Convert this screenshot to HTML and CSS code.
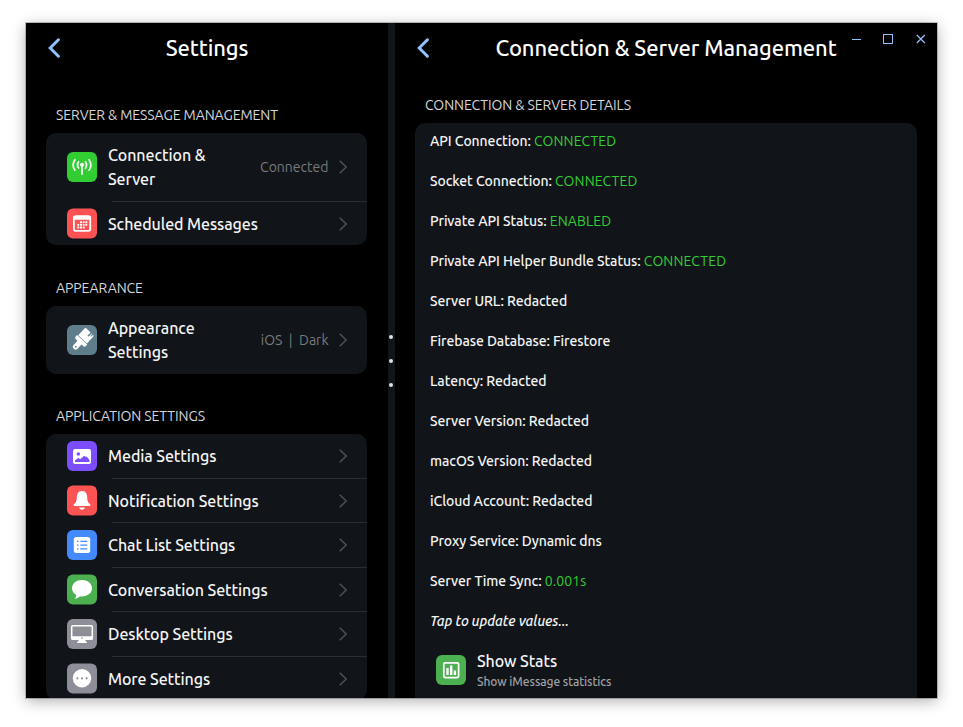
FILE: index.html
```html
<!DOCTYPE html>
<html lang="en">
<head>
<meta charset="utf-8">
<title>Settings</title>
<link rel="stylesheet" href="styles.css">
</head>
<body>
<svg class="defs" width="0" height="0">
  <symbol id="chev" viewBox="0 0 10 16"><path d="M1.700 1.700 8.200 8 1.700 14.300" fill="none" stroke="#4e5054" stroke-width="1.500"/></symbol>
  <symbol id="back" viewBox="0 0 14 20"><path d="M11.400 1.800 3.200 10l8.200 8.200" fill="none" stroke="#90c1fb" stroke-width="3" stroke-linecap="round" stroke-linejoin="miter"/></symbol>
</svg>
<div class="window">
  <section class="pane left">
    <header class="bar"><svg class="back"><use href="#back"/></svg><h1>Settings</h1></header>
    <h2 class="s1">SERVER &amp; MESSAGE MANAGEMENT</h2>
    <div class="card">
      <div class="row tall">
        <span class="ico green"><svg viewBox="0 0 30 30"><g fill="none" stroke="#fff" stroke-width="1.700"><path d="M11.900 9.300q-2.800 3.700 0 7.400M18.100 9.300q2.800 3.700 0 7.400M8.300 7.200q-4.400 5.800 0 11.600M21.700 7.200q4.400 5.800 0 11.600M15 13v9.800"/></g><circle cx="15" cy="12.800" r="2" fill="#fff"/></svg></span>
        <span class="label">Connection &amp;<br>Server</span><span class="value">Connected</span><svg class="chev"><use href="#chev"/></svg>
      </div>
      <div class="row">
        <span class="ico red"><svg viewBox="0 0 30 30"><rect x="6.900" y="7.700" width="16.300" height="14.600" rx="1.700" fill="none" stroke="#fff" stroke-width="1.800"/><path d="M6.500 7.500h17v3.700h-17z" fill="#fff"/><path d="M13 13.700h8M10.300 16.400h10.700M10.300 19h8" fill="none" stroke="#fff" stroke-width="1.900" stroke-dasharray="1.900 .8"/></svg></span>
        <span class="label">Scheduled Messages</span><svg class="chev"><use href="#chev"/></svg>
      </div>
    </div>
    <h2 class="s2">APPEARANCE</h2>
    <div class="card">
      <div class="row tall">
        <span class="ico slate"><svg viewBox="0 0 30 30"><g transform="translate(-.9 .9) rotate(43 15 15)" fill="#fff"><path d="M9 3.500q0-1.200 1.200-1.200h6V7h1.400V2.300h.8v2.800h1.100V2.300q1.500 0 1.500 1.500v9H9z"/><path d="M8 13.500h14v1.700q0 2.200-2 2.200h-2.300v5.700a2.700 2.700 0 0 1-5.400 0v-5.700H10q-2 0-2-2.200z"/><circle cx="15" cy="22.800" r=".9" fill="#607d8b"/></g></svg></span>
        <span class="label">Appearance<br>Settings</span><span class="value">iOS&nbsp; |&nbsp; Dark</span><svg class="chev"><use href="#chev"/></svg>
      </div>
    </div>
    <h2 class="s3">APPLICATION SETTINGS</h2>
    <div class="card last">
      <div class="row">
        <span class="ico purple"><svg viewBox="0 0 30 30"><rect x="6" y="8" width="18" height="15" rx="2" fill="#fff"/><circle cx="11.300" cy="13" r="1.800" fill="#7c4dff"/><path d="M8 21v-1.500l3.200-2.700 2 1.500 4-3.500 1.500 1.300 1-.6 2.800 3.500V21z" fill="#7c4dff"/></svg></span>
        <span class="label">Media Settings</span><svg class="chev"><use href="#chev"/></svg>
      </div>
      <div class="row">
        <span class="ico red"><svg viewBox="0 0 30 30" fill="#fff"><path d="M15 5.500c-3.700 0-5.200 3-5.200 6 0 4.200-1.100 5.800-2.500 6.800-1.200.9-.8 2.200.3 2.200h14.800c1.100 0 1.500-1.300.3-2.200-1.400-1-2.500-2.600-2.500-6.800 0-3-1.500-6-5.200-6zM12 22h6c-.6 1.500-1.700 2.300-3 2.300S12.600 23.500 12 22z"/></svg></span>
        <span class="label">Notification Settings</span><svg class="chev"><use href="#chev"/></svg>
      </div>
      <div class="row">
        <span class="ico blue"><svg viewBox="0 0 30 30"><rect x="6.800" y="7" width="16.400" height="16" rx="2.500" fill="#fff"/><path d="M10 11.400h1.500M10 15.100h1.500M10 18.800h1.500M13.300 11.400h7M13.300 15.100h7M13.300 18.800h7" stroke="#448aff" stroke-width="1.300"/></svg></span>
        <span class="label">Chat List Settings</span><svg class="chev"><use href="#chev"/></svg>
      </div>
      <div class="row">
        <span class="ico grass"><svg viewBox="0 0 30 30"><path d="M15 5.500c-5.600 0-10 3.500-10 8.200 0 2.900 1.700 5.300 4.300 6.800 0 1.500-.7 2.600-1.700 3.600 2.200 0 4.100-.9 5.300-2.400.7.100 1.400.2 2.100.2 5.600 0 10-3.500 10-8.200S20.600 5.500 15 5.500z" fill="#fff"/></svg></span>
        <span class="label">Conversation Settings</span><svg class="chev"><use href="#chev"/></svg>
      </div>
      <div class="row">
        <span class="ico gray"><svg viewBox="0 0 30 30"><rect x="4.700" y="6.700" width="20.600" height="13.500" rx="1" fill="none" stroke="#fff" stroke-width="1.500"/><path d="M4.500 17.300h21v3.200h-21zM12 20.500h6l1 2.200h1v1.300H10v-1.300h1z" fill="#fff"/><circle cx="15" cy="19" r=".8" fill="#8e8e98"/></svg></span>
        <span class="label">Desktop Settings</span><svg class="chev"><use href="#chev"/></svg>
      </div>
      <div class="row">
        <span class="ico gray"><svg viewBox="0 0 30 30"><circle cx="15" cy="14.800" r="9.200" fill="#fff"/><g fill="#8e8e98"><circle cx="10.400" cy="14.800" r="1.100"/><circle cx="15" cy="14.800" r="1.100"/><circle cx="19.600" cy="14.800" r="1.100"/></g></svg></span>
        <span class="label">More Settings</span><svg class="chev"><use href="#chev"/></svg>
      </div>
    </div>
  </section>
  <div class="divider"><i></i><i></i><i></i></div>
  <section class="pane right">
    <header class="bar"><svg class="back"><use href="#back"/></svg><h1>Connection &amp; Server Management</h1>
      <svg class="controls" viewBox="0 0 76 12" fill="none" stroke="#90c1fb"><path d="M0 6.500h9"/><rect x="31.500" y="1.500" width="9" height="9"/><path d="M64.800 2l8 8M72.800 2l-8 8" stroke-width="1.200"/></svg>
    </header>
    <h2>CONNECTION &amp; SERVER DETAILS</h2>
    <div class="card details">
      <p>API Connection: <b>CONNECTED</b></p>
      <p>Socket Connection: <b>CONNECTED</b></p>
      <p>Private API Status: <b>ENABLED</b></p>
      <p>Private API Helper Bundle Status: <b>CONNECTED</b></p>
      <p>Server URL: Redacted</p>
      <p>Firebase Database: Firestore</p>
      <p>Latency: Redacted</p>
      <p>Server Version: Redacted</p>
      <p>macOS Version: Redacted</p>
      <p>iCloud Account: Redacted</p>
      <p>Proxy Service: Dynamic dns</p>
      <p>Server Time Sync: <b>0.001s</b></p>
      <p class="tap">Tap to update values...</p>
      <div class="stats">
        <span class="ico grass"><svg viewBox="0 0 30 30"><rect x="7.800" y="7.800" width="14.800" height="14.800" rx="1.500" fill="none" stroke="#fff" stroke-width="1.700"/><path d="M10.300 13h2.400v7h-2.400zM14 10.500h2.400V20H14zM17.700 15.500h2.400V20h-2.400z" fill="#fff"/></svg></span>
        <div><div class="label">Show Stats</div><div class="sub">Show iMessage statistics</div></div>
      </div>
    </div>
  </section>
</div>
</body>
</html>
```
FILE: styles.css
```css
* { box-sizing: border-box; }
html, body { margin: 0; height: 100%; overflow: hidden; background: #fff; }
body { padding: 23px 26px 29px; font-family: Ubuntu, "Noto Sans", sans-serif; color: #f4f4f5; }
.defs { position: absolute; }
.window { width: 911px; height: 675px; display: flex; overflow: hidden; background: #000; box-shadow: 0 0 0 1px rgba(0,0,0,.22), 0 3px 14px rgba(0,0,0,.32); }
.pane { overflow: hidden; height: 675px; }
.left { width: 362px; padding: 0 20px; }
.right { flex: 1; padding: 0 20px; }
.divider { width: 7px; background: #111418; display: flex; flex-direction: column; align-items: flex-start; justify-content: center; gap: 20px; padding: 0 0 0 1px; }
.divider i { width: 4px; height: 4px; border-radius: 50%; background: #e2e3e8; }
.bar { height: 50px; display: flex; align-items: center; justify-content: center; position: relative; }
.back { position: absolute; left: 1px; top: 15px; width: 14px; height: 20px; }
h1 { margin: 0; font-size: 22px; line-height: 30px; font-weight: 500; color: #fff; white-space: nowrap; letter-spacing: -.11px; }
.controls { position: absolute; left: 437px; top: 10px; width: 76px; height: 12px; }
h2 { margin: 0 0 0 10px; font-size: 14px; line-height: 20px; font-weight: 400; color: #d5d6da; letter-spacing: -.08px; white-space: nowrap; }
.s1 { padding-top: 32px; padding-bottom: 8px; }
.s2, .s3 { padding-top: 33px; padding-bottom: 8px; }
.s3 { padding-top: 32px; }
.right h2 { padding-top: 22px; padding-bottom: 8px; }
.card { width: 321.400px; background: #111418; border-radius: 10px; overflow: hidden; }
.row { height: 44.500px; display: flex; align-items: center; padding: 0 19.400px 0 21px; position: relative; }
.row:last-child { height: 43.500px; }
.row.tall { height: 68px; }
.row + .row::before { content: ""; position: absolute; left: 66px; right: 0; top: -.5px; height: 1px; background: #2b2d31; }
.row:nth-child(even) .label, .row:nth-child(even) .chev { position: relative; top: 1px; }
.row:nth-child(even) .ico { transform: translateY(.5px); }
.ico { width: 30px; height: 30px; border-radius: 6px; flex: none; }
.ico svg { display: block; width: 30px; height: 30px; }
.row.tall:last-child { height: 68px; }
.green { background: #32cd32; }
.red { background: #ff5252; }
.slate { background: #607d8b; }
.purple { background: #7c4dff; }
.blue { background: #448aff; }
.grass { background: #4caf50; }
.gray { background: #8e8e98; }
.label { flex: 1; margin-left: 11px; font-size: 16px; line-height: 24px; letter-spacing: -.08px; font-weight: 500; white-space: nowrap; }
.value { font-size: 14px; color: #797a7e; margin-right: 9.500px; }
.chev { width: 10px; height: 16px; flex: none; }
.details { width: 502px; height: 600px; padding: 8px 15px; }
.details p { margin: 0 0 20px; font-size: 14px; line-height: 20px; font-weight: 500; letter-spacing: -.08px; white-space: nowrap; }
.details b { font-weight: 400; letter-spacing: .12px; color: #32cd32; }
.details .tap { font-style: italic; }
.stats { display: flex; align-items: center; margin: -1px 0 0 6px; }
.stats .label { line-height: 22px; }
.sub { margin-left: 11px; font-size: 12px; line-height: 18px; font-weight: 500; color: #a1a2a6; letter-spacing: -.06px; position: relative; top: 1px; }
```
